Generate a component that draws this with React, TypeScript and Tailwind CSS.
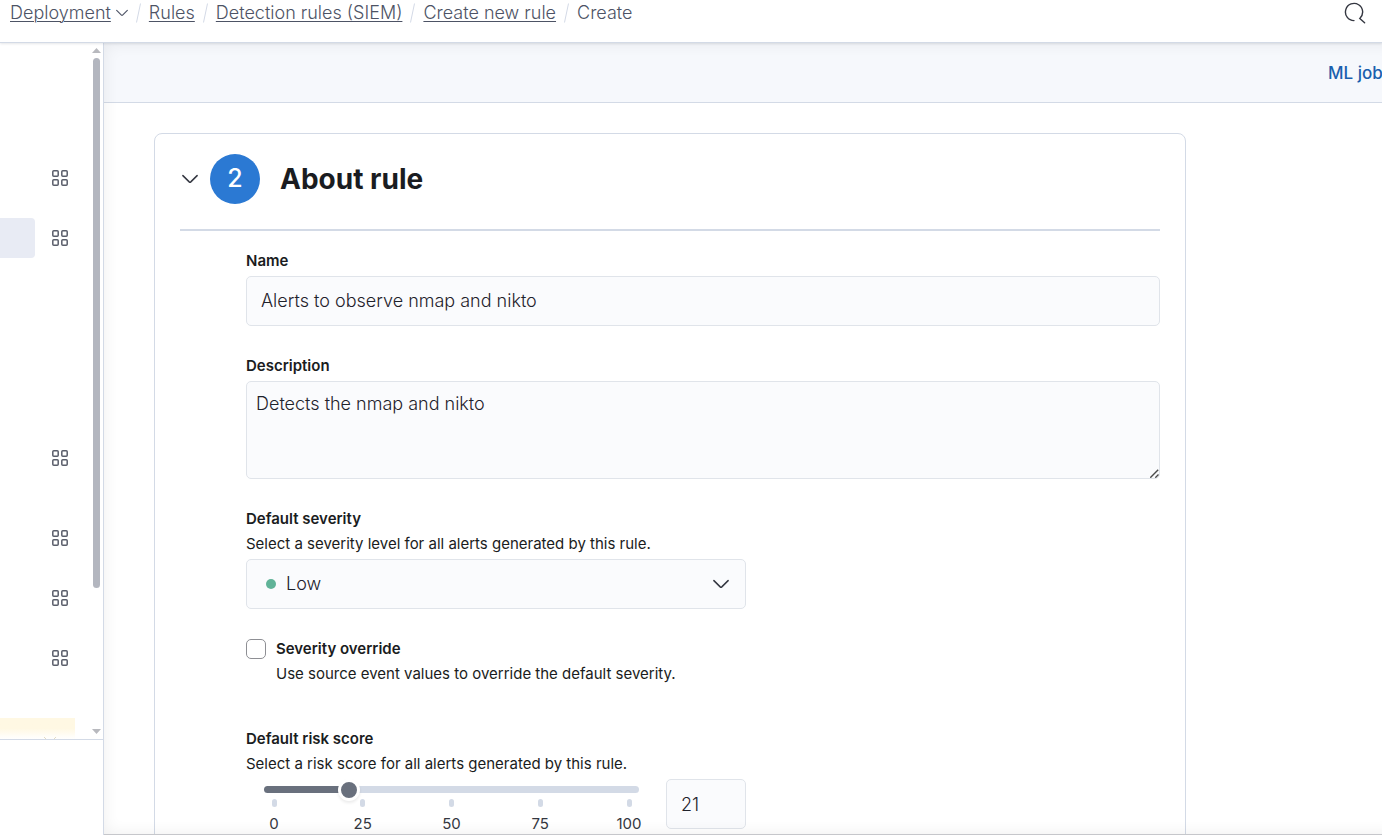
import { Fragment, useState } from "react";

function Chevron({ className }: { className: string }) {
  return (
    <svg viewBox="0 0 16 16" className={className} fill="none" stroke="currentColor" aria-hidden="true">
      <path d="M0.9 4.6 7.2 10.9Q8 11.6 8.8 10.9L15.1 4.6" strokeWidth="1.5" strokeLinecap="round" />
    </svg>
  );
}

function AppsIcon() {
  return (
    <svg viewBox="0 0 16 16" className="size-4" fill="none" stroke="currentColor" strokeWidth="1.5" aria-hidden="true">
      <rect x="0.8" y="0.8" width="5.4" height="5.4" rx="1" />
      <rect x="9.8" y="0.8" width="5.4" height="5.4" rx="1" />
      <rect x="0.8" y="9.8" width="5.4" height="5.4" rx="1" />
      <rect x="9.8" y="9.8" width="5.4" height="5.4" rx="1" />
    </svg>
  );
}

const crumbs = ["Deployment", "Rules", "Detection rules (SIEM)", "Create new rule"];

function Header() {
  return (
    <header className="relative z-10 flex h-[43px] shrink-0 items-start justify-between border-b border-[#d3dae6] bg-white pl-[10px] pr-4 shadow-[0_1px_2px_rgba(60,65,85,0.12)]">
      <nav aria-label="Breadcrumbs" className="flex h-[26px] items-center gap-2 whitespace-nowrap text-[18px] font-light leading-[26px] text-[#4d5365]">
        {crumbs.map((c, i) => (
          <Fragment key={c}>
            <a href="#" className="flex items-center gap-[5px]">
              <span className="underline decoration-1 underline-offset-2">{c}</span>
              {i === 0 && <Chevron className="size-3" />}
            </a>
            <svg viewBox="0 0 5 20" className="h-5 w-[5px] text-[#d3dae6]" stroke="currentColor" aria-hidden="true">
              <path d="M4.5 0.5 0.5 19.5" />
            </svg>
          </Fragment>
        ))}
        <span>Create</span>
      </nav>
      <button aria-label="Search" className="flex h-[26px] items-center text-[#343741]">
        <svg viewBox="0 0 22 22" className="size-[22px]" fill="none" stroke="currentColor" strokeWidth="1.4" strokeLinecap="round" aria-hidden="true">
          <path d="M10 18.6A8.6 8.6 0 1 1 15.8 16.4L20.6 20.7" />
        </svg>
      </button>
    </header>
  );
}

const navItems = [
  { label: "Discover", gap: "", active: false },
  { label: "Rules", gap: "mt-5", active: true },
  { label: "Findings", gap: "mt-[180px]", active: false },
  { label: "Investigations", gap: "mt-10", active: false },
  { label: "Explore", gap: "mt-5", active: false },
  { label: "Assets", gap: "mt-5", active: false },
];

function Sidebar() {
  return (
    <aside className="flex w-[104px] shrink-0 flex-col border-r border-[#d3dae6] bg-white">
      <div className="flex min-h-0 flex-1 justify-between overflow-hidden border-b border-[#d3dae6]">
        <div className="w-20 pt-[115px]">
          {navItems.map((item) => (
            <div key={item.label} className={`flex h-10 items-center justify-between ${item.gap}`}>
              <span className={`h-10 w-[35px] rounded-r ${item.active ? "bg-[#e8ebf4]" : ""}`} />
              <button aria-label={item.label} className="flex size-10 items-center justify-center text-[#5a5e6b]">
                <AppsIcon />
              </button>
            </div>
          ))}
          <div className="mt-10 flex h-[21px] w-[75px] items-end bg-linear-to-b from-[#fff8e3] from-50% to-white pl-11">
            <svg viewBox="0 0 12 2" className="h-[2px] w-3 text-[#e3dcc4]" stroke="currentColor" aria-hidden="true">
              <path d="M0 0 2 2M12 0 10 2" />
            </svg>
          </div>
        </div>
        <div className="flex w-[13px] flex-col items-center py-[5px]" aria-hidden="true">
          <svg viewBox="0 0 9 5" className="h-[5px] w-[9px] shrink-0 fill-[#b8b9be]"><path d="M0 5 4.5 0 9 5z" /></svg>
          <div className="flex min-h-0 w-full flex-1 flex-col items-center py-[5px]">
            <div className="h-[530px] w-[7px] rounded-full bg-[#b3b6bf]" />
          </div>
          <svg viewBox="0 0 9 5" className="h-[5px] w-[9px] shrink-0 fill-[#b8b9be]"><path d="M0 0h9L4.5 5z" /></svg>
        </div>
      </div>
      <div className="h-[95px] shrink-0" />
    </aside>
  );
}

const label = "block text-[15px] font-semibold leading-5 text-[#1a1c21]";
const help = "mt-[5px] text-[15px] font-normal leading-5 text-[#1a1c21]";
const field = "rounded-[5px] border border-[#e0e4ea] bg-[#fafbfd] text-[18px] font-light text-[#1f222b]";

function AboutRuleForm() {
  const [score, setScore] = useState(21);
  return (
    <form className="ml-[66px] pt-5">
      <label htmlFor="name" className={label}>Name</label>
      <input id="name" defaultValue="Alerts to observe nmap and nikto" className={`mt-[5px] block h-[50px] w-full px-[14px] pb-[2px] ${field}`} />

      <label htmlFor="description" className={`mt-[30px] ${label}`}>Description</label>
      <div className="relative mt-[5px]">
        <textarea id="description" defaultValue="Detects the nmap and nikto" className={`block h-[98px] w-full resize-y px-[9px] py-[9px] leading-[26px] [&::-webkit-resizer]:bg-transparent ${field}`} />
        <svg viewBox="0 0 9 9" className="pointer-events-none absolute bottom-px right-px size-[9px] text-[#4a4a4a]" stroke="currentColor" strokeWidth="1.4" aria-hidden="true">
          <path d="M0.3 8.7 8.2 0.8M5.3 8.7 8.5 5.5" />
        </svg>
      </div>

      <label htmlFor="severity" className={`mt-[30px] ${label}`}>Default severity</label>
      <p className={help}>Select a severity level for all alerts generated by this rule.</p>
      <div className="relative mt-[5px] max-w-[500px]">
        <select id="severity" className={`block h-[50px] w-full appearance-none pb-[2px] pl-[39px] pr-12 ${field}`}>
          <option>Low</option>
        </select>
        <span className="pointer-events-none absolute left-5 top-5 size-[10px] rounded-full bg-[#60b398]" />
        <Chevron className="pointer-events-none absolute right-[17px] top-[17px] size-4 text-[#343741]" />
      </div>

      <div className="mt-[30px] flex gap-[10px]">
        <input id="override" type="checkbox" className="size-5 shrink-0 appearance-none rounded-[5px] border border-[#8e8f94] bg-white" />
        <div>
          <label htmlFor="override" className={label}>Severity override</label>
          <p className={help}>Use source event values to override the default severity.</p>
        </div>
      </div>

      <label htmlFor="risk" className={`mt-[45px] ${label}`}>Default risk score</label>
      <p className={help}>Select a risk score for all alerts generated by this rule.</p>
      <div className="mt-[5px] flex max-w-[500px] gap-[27px] pl-[18px]">
        <div className="min-w-0 flex-1">
          <input
            id="risk"
            type="range"
            min={0}
            max={100}
            value={score}
            onChange={(e) => setScore(Number(e.target.value))}
            style={{ backgroundImage: `linear-gradient(to right, #69707d ${score}%, #d3dae6 ${score}%)` }}
            className="mt-[7px] mb-[6px] block h-[7px] w-full appearance-none rounded-full [&::-webkit-slider-thumb]:size-[22px] [&::-webkit-slider-thumb]:appearance-none [&::-webkit-slider-thumb]:rounded-full [&::-webkit-slider-thumb]:border-3 [&::-webkit-slider-thumb]:border-white [&::-webkit-slider-thumb]:bg-[#69707d] [&::-webkit-slider-thumb]:shadow-[0_2px_3px_rgba(0,0,0,0.08)]"
          />
          <div className="-mx-[10px] flex justify-between">
            {[0, 25, 50, 75, 100].map((t) => (
              <span key={t} className="flex w-10 flex-col items-center text-[15px] leading-5 text-[#343741]">
                <span className="mb-[7px] h-2 w-[5px] rounded-full bg-[#d3dae6]" />
                {t}
              </span>
            ))}
          </div>
        </div>
        <input aria-label="Risk score" value={score} onChange={(e) => setScore(Number(e.target.value) || 0)} className={`h-[50px] w-20 px-[14px] ${field}`} />
      </div>
    </form>
  );
}

export default function App() {
  return (
    <div className="flex h-screen flex-col overflow-hidden bg-white font-['Inter',sans-serif]">
      <Header />
      <div className="flex min-h-0 flex-1">
        <Sidebar />
        <main className="relative flex min-w-0 flex-1 flex-col overflow-hidden border-b border-[#c6c7cb]">
          <div className="flex h-[60px] shrink-0 items-center justify-end border-b border-[#d3dae6] bg-[#f6f8fc]">
            <button className="w-[54px] whitespace-nowrap text-left text-[17px] font-medium leading-[26px] text-[#1a5fae]">ML job</button>
          </div>
          <div className="min-h-0 flex-1 overflow-hidden px-[50px] pt-[30px]">
            <section className="max-w-[1032px] rounded-[8px] border border-[#d3dae6] px-[25px] pb-10 pt-5">
              <div className="flex items-center border-b-2 border-[#d3dae6] pb-[25px]">
                <button aria-label="Toggle section" className="flex w-[30px] text-[#343741]">
                  <Chevron className="ml-[2px] size-4" />
                </button>
                <span className="flex size-[50px] items-center justify-center rounded-full bg-[#2b79d3] text-[25px] font-medium text-white">2</span>
                <h2 className="ml-5 text-[28px] font-bold leading-10 text-[#1a1c21]">About rule</h2>
              </div>
              <AboutRuleForm />
            </section>
          </div>
          <div className="pointer-events-none absolute inset-y-0 left-0 -right-4 shadow-[inset_0_0_16px_rgba(0,0,0,0.07)]" />
        </main>
      </div>
    </div>
  );
}
